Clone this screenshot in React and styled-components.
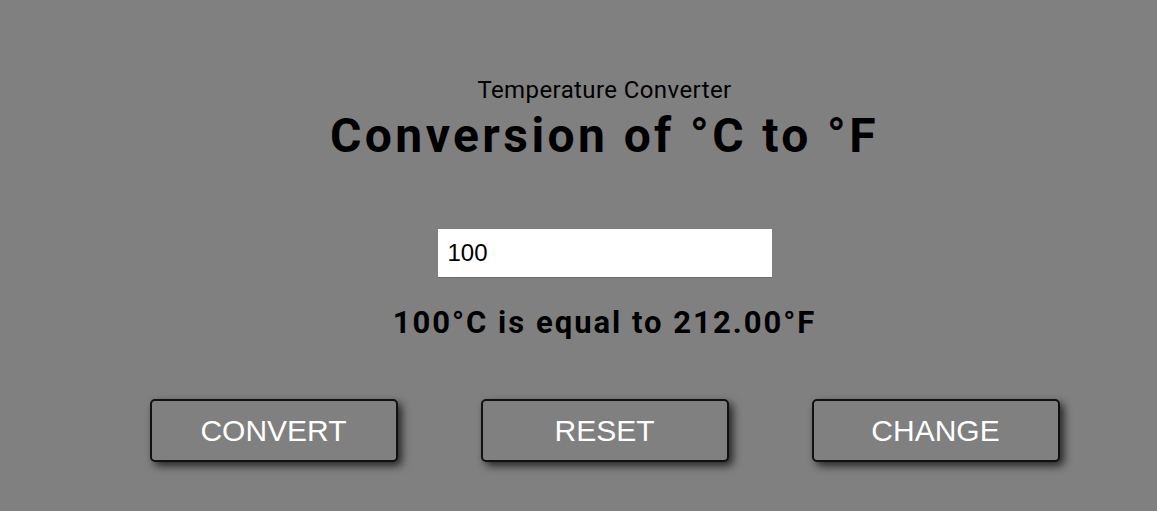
import React, { useState } from "react";
import styled, { createGlobalStyle } from "styled-components";

const Global = createGlobalStyle`
  html, body {
    margin: 0;
    padding: 0;
    background: #808080;
  }
  body {
    font-family: Roboto, "Liberation Sans", sans-serif;
  }
`;

const Page = styled.main`
  min-height: 511px;
  box-sizing: border-box;
  padding: 75px 0 0 52px;
  display: flex;
  flex-direction: column;
  align-items: center;
`;

const Subtitle = styled.h2`
  margin: 0;
  font-family: Roboto, sans-serif;
  font-weight: 400;
  font-size: 24px;
  line-height: 30px;
  letter-spacing: 0.4px;
  color: #000;
`;

const Title = styled.h1`
  margin: 0;
  font-family: Roboto, sans-serif;
  font-weight: 700;
  font-size: 48px;
  line-height: 62px;
  letter-spacing: 3.4px;
  color: #000;
`;

const Input = styled.input`
  margin-top: 62px;
  width: 334px;
  height: 49px;
  box-sizing: border-box;
  border: none;
  border-bottom: 1px solid #6a6a6a;
  background: #fff;
  padding: 0 10px;
  font-family: "Liberation Sans", Arial, sans-serif;
  font-size: 24px;
  color: #000;
  outline: none;
`;

const Result = styled.p`
  margin: 25px 0 0;
  font-family: Roboto, sans-serif;
  font-weight: 700;
  font-size: 31px;
  line-height: 40px;
  letter-spacing: 2px;
  color: #000;
`;

const Buttons = styled.div`
  margin-top: 56px;
  display: flex;
  gap: 83px;
`;

const Button = styled.button`
  width: 248px;
  height: 63px;
  box-sizing: border-box;
  border: 2px solid #111;
  border-radius: 5px;
  background: #808080;
  color: #fff;
  font-family: "Liberation Sans", Arial, sans-serif;
  font-size: 30px;
  text-transform: uppercase;
  box-shadow: 4px 4px 8px rgba(0, 0, 0, 0.7);
  cursor: pointer;
`;

export default function App() {
  const [value, setValue] = useState("100");
  const c = parseFloat(value) || 0;
  const f = (c * 9) / 5 + 32;
  return (
    <>
      <Global />
      <Page>
        <Subtitle>Temperature Converter</Subtitle>
        <Title>Conversion of °C to °F</Title>
        <Input value={value} onChange={(e) => setValue(e.target.value)} />
        <Result>
          {c}°C is equal to {f.toFixed(2)}°F
        </Result>
        <Buttons>
          <Button>Convert</Button>
          <Button onClick={() => setValue("")}>Reset</Button>
          <Button>Change</Button>
        </Buttons>
      </Page>
    </>
  );
}
